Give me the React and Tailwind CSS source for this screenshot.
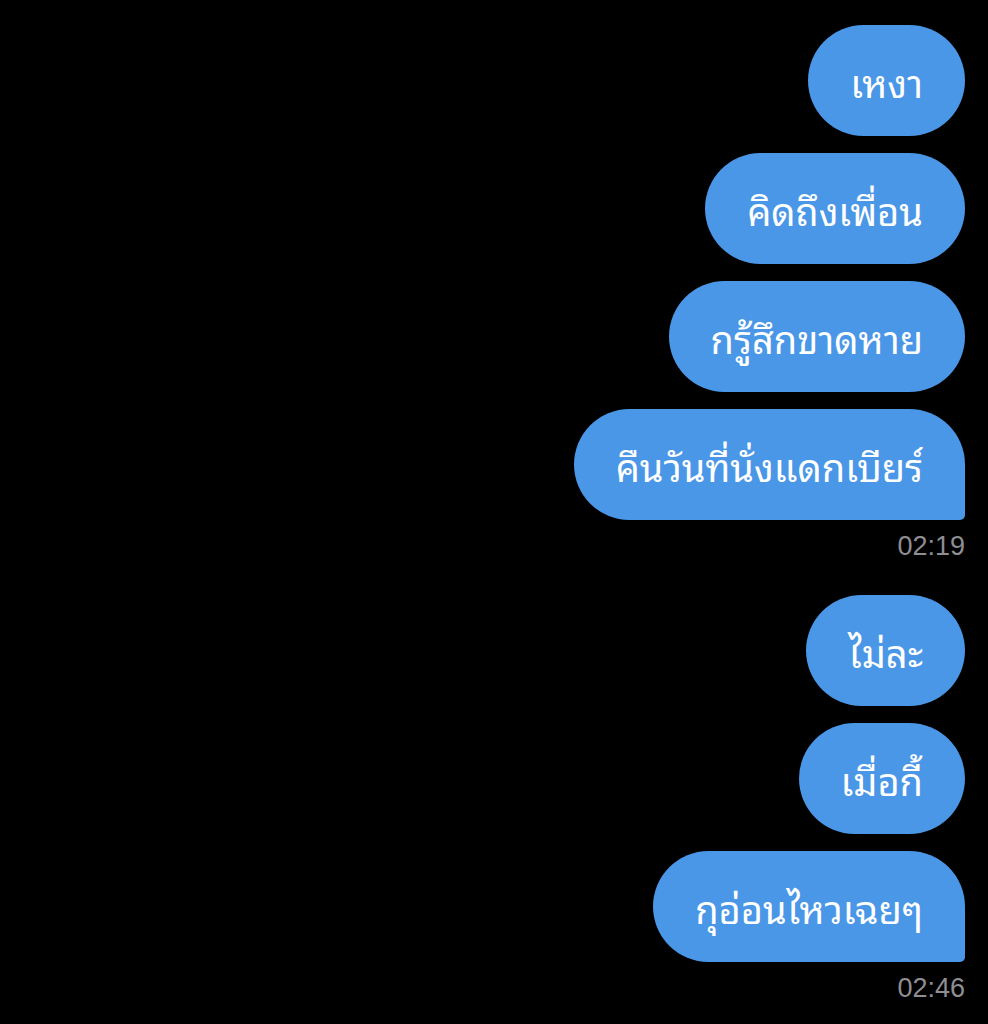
import React from 'react';

const groups = [
  { time: '02:19', items: ['เหงา', 'คิดถึงเพื่อน', 'กรู้สึกขาดหาย', 'คืนวันที่นั่งแดกเบียร์'] },
  { time: '02:46', items: ['ไม่ละ', 'เมื่อกี้', 'กุอ่อนไหวเฉยๆ'] },
];

const Bubble = ({ text, last }) => (
  <div
    className={`h-[111px] flex items-center px-[42px] bg-[#4a97e7] text-white text-[38px] rounded-[56px] ${last ? 'rounded-br-[5px]' : ''}`}
    style={{ fontFamily: '"Noto Sans Thai Looped", "Loma", "Garuda", "Noto Sans Thai", "Noto Sans", sans-serif' }}
  >
    {text}
  </div>
);

export default function App() {
  return (
    <div className="min-h-[1024px] w-full bg-black pt-[25px] pr-[23px] flex flex-col items-end">
      {groups.map((g, gi) => (
        <div key={gi} className={`flex flex-col items-end gap-[17px] ${gi > 0 ? 'mt-[35px]' : ''}`}>
          {g.items.map((t, i) => (
            <Bubble key={i} text={t} last={i === g.items.length - 1} />
          ))}
          <div className="-mt-[5px] text-[27px] leading-[28px] text-[#8e8e93] font-['Liberation_Sans',sans-serif]">
            {g.time}
          </div>
        </div>
      ))}
    </div>
  );
}
